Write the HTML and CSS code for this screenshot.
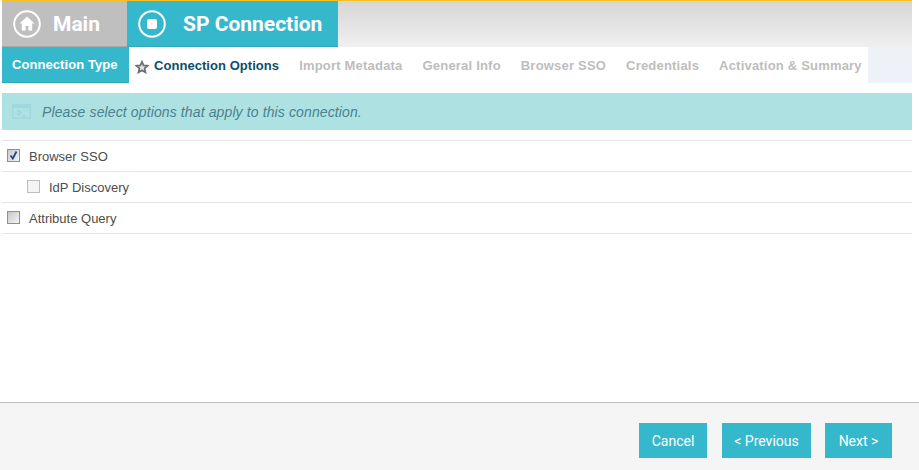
FILE: index.html
```html
<!DOCTYPE html>
<html lang="en">
<head>
<meta charset="utf-8">
<title>SP Connection</title>
<link rel="stylesheet" href="styles.css">
</head>
<body>
<div class="page">
  <header class="head">
    <div class="crumb crumb-main">
      <svg class="crumb-icon" viewBox="0 0 28 28" width="28" height="28"><circle cx="14" cy="14" r="12.8" fill="none" stroke="#fff" stroke-width="2"/><path d="M14 6.6 6.6 13.6h2.2V20.6h3.8v-4.6h2.8v4.6h3.8V13.6h2.2z" fill="#fff"/></svg>
      <span>Main</span>
    </div>
    <div class="crumb crumb-current">
      <svg class="crumb-icon" viewBox="0 0 28 28" width="28" height="28"><circle cx="14" cy="14" r="12.8" fill="none" stroke="#fff" stroke-width="2"/><rect x="9" y="9" width="10" height="10" rx="2" fill="#fff"/></svg>
      <span>SP Connection</span>
    </div>
  </header>
  <nav class="tabs">
    <div class="tab-done">Connection Type</div>
    <div class="tab-list">
      <div class="tab tab-active">
        <svg class="star" viewBox="0 0 14 14" width="14" height="14"><path d="M7 1.8 8.6 5.4 12.6 5.8 9.6 8.4 10.5 12.4 7 10.3 3.5 12.4 4.4 8.4 1.4 5.8 5.4 5.4z" fill="#e4e4e4" stroke="#6e6e6e" stroke-width="1.7"/></svg>
        <span>Connection Options</span>
      </div>
      <div class="tab">Import Metadata</div>
      <div class="tab">General Info</div>
      <div class="tab">Browser SSO</div>
      <div class="tab">Credentials</div>
      <div class="tab">Activation &amp; Summary</div>
    </div>
  </nav>
  <div class="banner">
    <svg class="banner-icon" viewBox="0 0 19 15" width="19" height="15"><path d="M0 0h19v15H0z" fill="#9fd8df"/><path d="M1.5 4h16v9.5h-16z" fill="#aee1e1"/><path d="M5 6l4 2.5L5 11M10 12h4" fill="none" stroke="#9fd8df" stroke-width="1.6"/></svg>
    <em>Please select options that apply to this connection.</em>
  </div>
  <div class="options">
    <label class="option"><span class="check check-on"><svg viewBox="0 0 11 11" width="11" height="11"><path d="M2.5 5.5 4.8 8.5 8.5 1.5" fill="none" stroke="#2b3f9c" stroke-width="1.8"/></svg></span>Browser SSO</label>
    <label class="option option-sub"><span class="check check-off"></span>IdP Discovery</label>
    <label class="option"><span class="check"></span>Attribute Query</label>
  </div>
</div>
<footer class="foot">
  <button class="btn btn-cancel">Cancel</button>
  <button class="btn btn-prev">&lt; Previous</button>
  <button class="btn btn-next">Next &gt;</button>
</footer>
</body>
</html>
```

FILE: styles.css
```css
* { box-sizing: border-box; }
html, body { margin: 0; height: 100%; }
body {
  background: #fff;
  font-family: "Liberation Sans", Arial, sans-serif;
  display: flex;
  flex-direction: column;
  height: 470px;
  overflow: hidden;
}
.page { flex: 1; margin: 0 7px 0 2px; }
.head {
  display: flex;
  height: 47px;
  border-top: 1px solid #f7bf1f;
  background: linear-gradient(#d6d6d6, #f0f0f0);
}
.crumb {
  display: flex;
  align-items: center;
  color: #fff;
  font-family: Roboto, sans-serif;
  font-weight: 700;
  font-size: 21px;
}
.crumb-main { width: 125px; background: #bfbfbf; padding-left: 11px; gap: 12px; border-bottom: 1px solid #a9a9a9; }
.crumb-current { width: 211px; background: #36b8cc; padding-left: 11px; gap: 17px; border-bottom: 1px solid #2ea9bc; }
.tabs { display: flex; height: 36px; background: #eef1f7; }
.tab-done {
  width: 127px;
  background: #36b8cc;
  border-bottom: 1px solid #2ea9bc;
  color: #fff;
  font-size: 13px;
  font-weight: 700;
  letter-spacing: 0.07px;
  padding: 10px 0 0 10px;
}
.tab-list {
  display: flex;
  width: 739px;
  background: #fff;
  padding-left: 6px;
  gap: 20px;
  font-size: 13px;
  font-weight: 700;
  letter-spacing: 0.2px;
  color: #bdbdbd;
}
.tab { padding-top: 11px; white-space: nowrap; }
.tab-active { display: flex; gap: 5px; color: #0b4f6c; align-items: flex-start; letter-spacing: 0.05px; }
.star { margin-top: 2px; }
.banner {
  display: flex;
  align-items: center;
  gap: 11px;
  height: 37px;
  margin-top: 10px;
  padding-left: 10px;
  background: #aee1e1;
  color: #4a8290;
  font-size: 14px;
  letter-spacing: 0.12px;
}
.options { margin-top: 10px; border-top: 1px solid #e6e6e6; }
.option {
  display: flex;
  align-items: center;
  height: 31px;
  padding-left: 5px;
  border-bottom: 1px solid #e6e6e6;
  color: #4d4d4d;
  font-size: 13px;
}
.option-sub { padding-left: 25px; }
.check {
  width: 13px;
  height: 13px;
  margin-right: 9px;
  border: 1px solid #8f8f8f;
  background: linear-gradient(135deg, #c8c8c8, #f4f4f4);
  display: flex;
  position: relative;
  top: -1px;
}
.check-off { border-color: #bdbdbd; background: #f4f4f4; }
.foot {
  height: 68px;
  background: #f5f5f5;
  border-top: 1px solid #bdbdbd;
  display: flex;
  justify-content: flex-end;
  padding: 20px 27px 0 0;
  gap: 15px;
}
.btn {
  height: 35px;
  border: 0;
  background: #36b8cc;
  color: #fff;
  font-family: Roboto, sans-serif;
  font-size: 14px;
  padding: 0;
}
.btn-cancel { width: 68px; }
.btn-prev { width: 89px; }
.btn-next { width: 67px; margin-left: -1px; }
```
